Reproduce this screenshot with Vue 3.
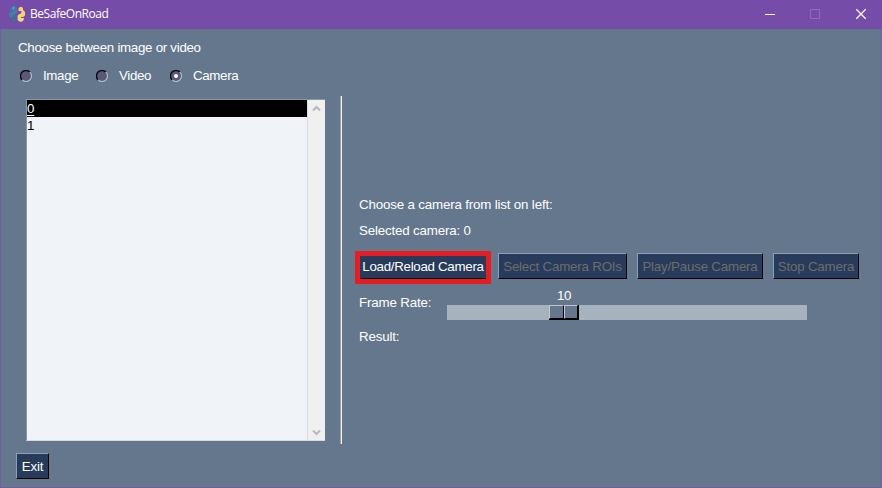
<script setup>
import { ref } from 'vue'

const sources = ['Image', 'Video', 'Camera']
const source = ref('Camera')
const cameras = ['0', '1']
const selected = ref('0')
const frameRate = ref(10)
const actions = [
  { label: 'Select Camera ROIs', cls: 'rois' },
  { label: 'Play/Pause Camera', cls: 'play' },
  { label: 'Stop Camera', cls: 'stop' },
]
</script>

<template>
  <div class="window">
    <header class="titlebar">
      <svg class="logo" width="18" height="18" viewBox="0 0 18 18">
        <path fill="#3f7fa3" d="M2.500 3.500Q3 1 6 1Q8.800 1.200 9 4V7Q9 9.500 6.500 9.500Q5 9.800 5 12L3.500 13Q1 12 1 9.500Q1 6.500 4 6.500V5.500H2.500z" />
        <path fill="#3c7190" d="M3 13Q5.500 13 6.500 10.500L8.500 9.500V14.500Q7.500 16.500 5.500 16.500Q3 16.300 3 13z" />
        <path fill="#f5d477" d="M10.500 3.500Q11.500 1.500 13.500 1.800Q15.300 2.500 15.200 5.200Q17.200 6 17.200 8.500Q17.200 11.800 14.500 12H13V13H16Q16 16.500 12.800 16.700Q9.800 16.500 9.600 14V11Q10 9 12 9Q13.800 8.600 13.500 6H10.500z" />
        <path fill="#d6e4df" d="M5 2.500h1v1H5zM13 14.500h1v1h-1z" />
      </svg>
      <span class="title">BeSafeOnRoad</span>
      <svg class="controls" width="102" height="12" viewBox="0 0 102 12" fill="none">
        <path stroke="#fff" d="M0 6.5h10" />
        <path stroke="#9469bf" d="M45.5 1.5h9v9h-9z" />
        <path stroke="#fff" stroke-width="1.3" d="M91.3 1.3l9.4 9.4M100.7 1.3l-9.4 9.4" />
      </svg>
    </header>

    <main class="body">
      <p class="prompt">Choose between image or video</p>
      <div class="radios">
        <label v-for="s in sources" :key="s" class="radio" @click="source = s">
          <svg width="12" height="12" viewBox="0 0 12 12">
            <circle cx="6" cy="6" r="5" fill="#5a5777" />
            <path d="M2.1 9.9A5.5 5.5 0 0 1 9.9 2.1" fill="none" stroke="#080a12" stroke-width="1.4" />
            <path d="M2.1 9.9A5.5 5.5 0 0 0 9.9 2.1" fill="none" stroke="#aebdcc" stroke-width="1.1" />
            <circle v-if="source === s" cx="6" cy="6" r="2" fill="#fff" />
          </svg>
          <span>{{ s }}</span>
        </label>
      </div>

      <div class="columns">
        <div class="listbox">
          <ul class="items">
            <li v-for="c in cameras" :key="c" :class="{ active: selected === c }" @click="selected = c"><span>{{ c }}</span></li>
          </ul>
          <div class="scroll">
            <svg width="9" height="7" viewBox="0 0 9 7"><path d="M1 5.5l3.5-3.5L8 5.5" fill="none" stroke="#b9b9b9" stroke-width="2" /></svg>
            <svg width="9" height="7" viewBox="0 0 9 7"><path d="M1 1.5L4.5 5 8 1.5" fill="none" stroke="#b9b9b9" stroke-width="2" /></svg>
          </div>
        </div>
        <div class="divider"></div>
        <section class="panel">
          <p class="choose">Choose a camera from list on left:</p>
          <p class="selected">Selected camera: {{ selected }}</p>
          <div class="buttons">
            <div class="highlight"><button class="btn load">Load/Reload Camera</button></div>
            <button v-for="a in actions" :key="a.label" class="btn" :class="a.cls" disabled>{{ a.label }}</button>
          </div>
          <div class="rate">
            <span class="rate-label">Frame Rate:</span>
            <div class="slider">
              <div class="thumb"><span class="value">{{ frameRate }}</span><i></i><i></i></div>
            </div>
          </div>
          <p class="result">Result:</p>
        </section>
      </div>
      <button class="btn exit">Exit</button>
    </main>
  </div>
</template>

<style>
body { margin: 0; overflow: hidden; }
</style>

<style scoped>
* { box-sizing: border-box; }
p, ul { margin: 0; padding: 0; list-style: none; }
.window {
  width: 882px;
  height: 488px;
  background: #64778d;
  border: 1px solid #705f9c;
  border-top: 0;
  color: #fff;
  font: 13.33px/16px "Liberation Sans", Arial, sans-serif;
  letter-spacing: -0.17px;
  white-space: nowrap;
}
.titlebar {
  display: flex;
  align-items: center;
  height: 29px;
  margin: 0 -1px;
  padding: 0 15px 2px 8px;
  background: #754da8;
}
.title { margin-left: 4px; font: 12px/16px "Open Sans", "Noto Sans", sans-serif; letter-spacing: -0.45px; }
.controls { margin-left: auto; }
.body { display: flex; flex-direction: column; align-items: flex-start; padding: 11px 0 0 15px; }
.prompt { padding-left: 2px; letter-spacing: -0.29px; }
.radios { display: flex; margin-top: 12px; padding-left: 4px; letter-spacing: -0.35px; }
.radio { display: flex; align-items: center; gap: 11px; }
.radio:nth-child(1) { width: 76px; }
.radio:nth-child(2) { width: 74px; }
.columns { display: flex; align-items: flex-start; margin-top: 12px; padding-left: 10px; height: 348px; }
.listbox {
  display: flex;
  width: 299px;
  height: 342px;
  margin-top: 3px;
  background: #f0f3f7;
  border: 1px solid #8c96a2;
  border-right: 0;
  border-bottom-color: #d5dade;
}
.items { flex: 1; color: #000; }
.items li { height: 17px; line-height: 17px; }
.items .active { background: #000; color: #fff; }
.active span { text-decoration: underline; text-underline-offset: 2px; text-decoration-thickness: 1px; }
.scroll {
  display: flex;
  flex-direction: column;
  align-items: center;
  justify-content: space-between;
  width: 18px;
  padding: 5px 0 4px;
  background: #f0f0f0;
  border-left: 1px solid #d9dde1;
}
.divider { width: 2px; height: 348px; margin-left: 15px; background: #f3f3f3; border-left: 1px solid #a0a0a0; }
.panel { padding: 101px 0 0 13px; }
.panel p { padding-left: 4px; }
.selected { margin-top: 10px; }
.buttons { display: flex; align-items: flex-start; margin-top: 12px; height: 33px; }
.highlight { width: 136px; height: 33px; margin-right: 7px; border: 5px solid #e81c23; }
.btn {
  height: 26px;
  padding: 2px 0 0;
  border: 1px solid #000;
  border-top-color: #8da0b7;
  border-left-color: #8da0b7;
  border-radius: 0;
  background: #283b5b;
  color: #fff;
  font: inherit;
  letter-spacing: -0.2px;
  white-space: nowrap;
}
.btn:disabled { color: #6d6d6d; }
.load { display: block; width: 126px; height: 23px; padding: 0; border-width: 0 0 1px; line-height: 20px; letter-spacing: -0.3px; }
.rois { width: 129px; margin-top: 2px; }
.play { width: 126px; margin: 2px 10px 0; }
.stop { width: 86px; margin-top: 2px; }
.rate { display: flex; margin-top: 11px; padding-left: 4px; height: 25px; }
.rate-label { width: 88px; }
.slider { width: 360px; height: 15px; margin-top: 10px; padding-left: 102px; background: #a6b2be; }
.thumb {
  position: relative;
  display: flex;
  width: 30px;
  height: 15px;
  border-right: 1px solid #000;
  border-bottom: 1px solid #000;
}
.thumb i {
  flex: 1;
  height: 14px;
  background: #64778d;
  border: 1px solid #c0c9d2;
  border-right-color: #000;
  border-bottom-color: #000;
}
.value { position: absolute; left: 0; top: -17px; width: 30px; text-align: center; letter-spacing: -0.5px; }
.result { margin-top: 9px; }
.exit { width: 33px; margin-top: 9px; }
</style>
